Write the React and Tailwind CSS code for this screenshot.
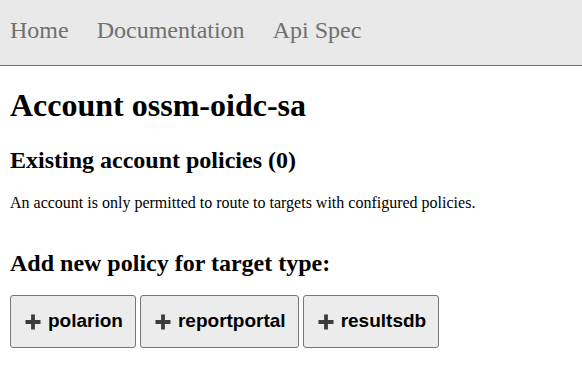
import React from 'react';

const targets = ['polarion', 'reportportal', 'resultsdb'];

const PlusIcon = () => (
  <svg width="16" height="16" viewBox="0 0 16 16" className="shrink-0">
    <path d="M8 0.5v15M0.5 8h15" stroke="#3c3c3c" strokeWidth="3.8" />
  </svg>
);

const App = () => {
  return (
    <div className="min-h-screen bg-white text-black font-['Liberation_Serif',serif]">
      <nav className="h-[66px] bg-[#e9e9e9] border-b border-[#6f6f6f] flex items-center gap-[28px] pl-[10px] pb-[6px] text-[24px] text-[#707070]">
        <a>Home</a>
        <a>Documentation</a>
        <a>Api Spec</a>
      </nav>

      <main className="px-[10px]">
        <h1 className="text-[32px] font-bold leading-[37px] mt-[21px]">Account ossm-oidc-sa</h1>
        <h2 className="text-[24px] font-bold leading-[28px] mt-[22px]">Existing account policies (0)</h2>
        <p className="text-[16px] leading-[18px] mt-[20px]">
          An account is only permitted to route to targets with configured policies.
        </p>

        <h2 className="text-[24px] font-bold leading-[28px] mt-[37px]">Add new policy for target type:</h2>
        <div className="flex gap-[4px] mt-[18px]">
          {targets.map((t) => (
            <button
              key={t}
              className="h-[53px] flex items-center gap-[7px] pl-[14px] pr-[12px] bg-[#ececec] border border-[#767676] rounded-[3px] font-['Liberation_Sans',Arial,sans-serif] font-bold text-[19px] text-black"
            >
              <PlusIcon />
              <span>{t}</span>
            </button>
          ))}
        </div>
      </main>
    </div>
  );
};

export default App;
